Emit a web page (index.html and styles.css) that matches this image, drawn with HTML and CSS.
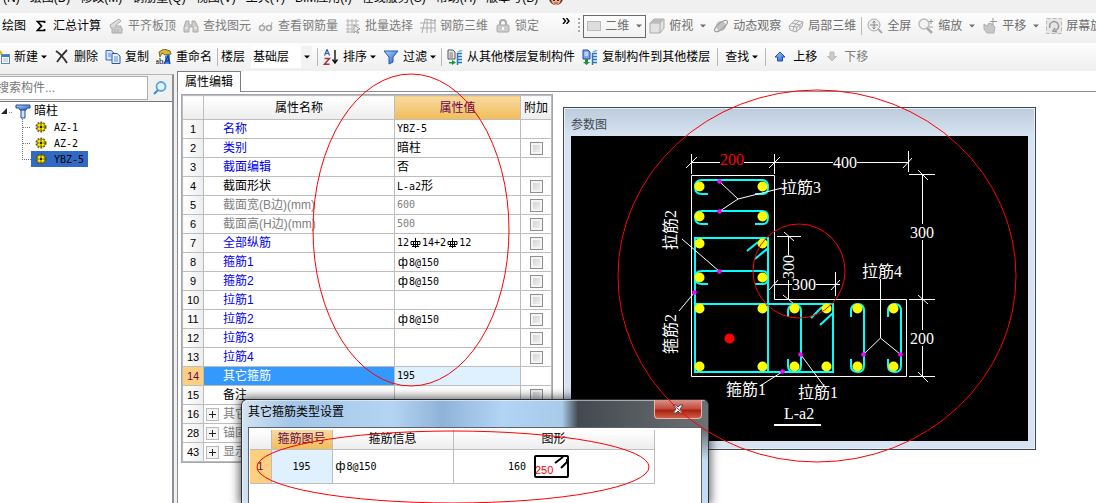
FILE: index.html
```html
<!DOCTYPE html>
<html lang="zh-CN">
<head>
<meta charset="utf-8">
<title>属性编辑</title>
<link rel="stylesheet" href="styles.css">
</head>
<body>
<svg class="defs" aria-hidden="true">
  <defs>
    <linearGradient id="blue" x1="0" y1="0" x2="1" y2="1"><stop offset="0" stop-color="#a9d2fb"/><stop offset="1" stop-color="#1f5fd0"/></linearGradient>
    <symbol id="arrow" viewBox="0 0 6 4"><path d="M0 0.5H6L3 3.5Z" fill="currentColor"/></symbol>
    <symbol id="copyfloor" viewBox="0 0 16 16">
      <path d="M1 1H6L8 3V10H1Z" fill="#e8e8e8" stroke="#555"/><path d="M2.500 4H6M2.500 6H6M2.500 8H6" stroke="#777"/>
      <path d="M2 13H5V11L9 13.500L5 16V14.500H2Z" fill="#149a3a"/>
      <path d="M10.500 4V16M10 4.500H15M10 7.500H15M10 10.500H15M10 13.500H15" stroke="#2b74b8" stroke-width="1.500"/><path d="M10 3L13 1H16L13.500 3Z" fill="#7fb7e6"/>
    </symbol>
    <symbol id="copyfloor2" viewBox="0 0 16 16">
      <path d="M1 1H6L8 3V10H1Z" fill="#7ea6ea" stroke="#2848a8"/><path d="M2.500 4H6M2.500 6H6" stroke="#fff"/>
      <path d="M3 10V13H1L4.500 16L8 13H6V10Z" fill="#149a3a"/>
      <path d="M10.500 4V16M10 4.500H15M10 7.500H15M10 10.500H15M10 13.500H15" stroke="#2b74b8" stroke-width="1.500"/><path d="M10 3L13 1H16L13.500 3Z" fill="#7fb7e6"/>
    </symbol>
    <symbol id="gear" viewBox="0 0 12 12">
      <circle cx="6" cy="6" r="4.700" fill="none" stroke="#5c5200" stroke-width="1.600" stroke-dasharray="1.800 1.200"/>
      <circle cx="6" cy="6" r="4" fill="#ffee00" stroke="#6b6000" stroke-width=".6"/><circle cx="6" cy="6" r="1.400" fill="#222"/>
      <path d="M6 2V4M6 8V10M2 6H4M8 6H10" stroke="#665b00"/>
    </symbol>
    <symbol id="rebar" viewBox="0 0 12 12"><path d="M6.500 1V11M2 4.500H11V7.500H2ZM4.500 4V9.500M8.500 4V9.500M3 9.500H10" fill="none" stroke="#000"/></symbol>
  </defs>
</svg>

<nav class="menubar">
  <a href="#">(N)</a><a href="#">绘图(D)</a><a href="#">修改(M)</a><a href="#">钢筋量(Q)</a><a href="#">视图(V)</a><a href="#">工具(T)</a><a href="#">BIM应用(I)</a><a href="#">在线服务(S)</a><a href="#">帮助(H)</a><a href="#">版本号(B)</a>
  <svg class="face" viewBox="0 0 16 16"><circle cx="8" cy="8" r="7" fill="#5b2f22"/><path d="M3 8Q8 5 13 8Q13 14 8 15Q3 14 3 8Z" fill="#f2b18a"/><circle cx="6" cy="10" r="1"/><circle cx="10" cy="10" r="1"/><path d="M6 13H10" stroke="#b33"/></svg>
</nav>

<div class="toolrow">
  <div class="toolbar tb-main">
    <button>绘图</button>
    <button><svg class="ic" viewBox="0 0 16 16"><path d="M11.500 5V3.500H4.500L8.500 8L4.500 12.500H11.500V11" fill="none" stroke="#000" stroke-width="1.700"/></svg>汇总计算</button>
    <button disabled><svg class="ic" viewBox="0 0 16 16"><path d="M2 7L11 1L13 3L7 8L13 8V10H3Z" fill="#ddd" stroke="#aaa"/><path d="M4 10V15H14V10M7 11V15M10 11V15" fill="#ccc" stroke="#aaa"/></svg>平齐板顶</button>
    <button disabled><svg class="ic" viewBox="0 0 16 16"><path d="M3 3H6V7H9V3H12L15 9V14H10V9H6V14H1V9Z" fill="#ccc" stroke="#aaa"/><path d="M2 10H5M11 10H14" stroke="#fff"/></svg>查找图元</button>
    <button disabled><svg class="ic" viewBox="0 0 16 16"><circle cx="4" cy="10" r="2.500" fill="none" stroke="#aaa" stroke-width="1.500"/><circle cx="11" cy="10" r="2.500" fill="none" stroke="#aaa" stroke-width="1.500"/><path d="M6 9H9M2 9L6 5M13 10L14 4" stroke="#aaa" fill="none"/></svg>查看钢筋量</button>
    <button disabled><svg class="ic" viewBox="0 0 16 16"><path d="M1 3H14M1 7H14M1 11H8M1 14H8M3 1V15M7 1V15M11 1V9" stroke="#b4b4b4"/><path d="M9 7L15 11L12 12L14 15L12 15L11 13L9 15Z" fill="#eee" stroke="#999"/></svg>批量选择</button>
    <button disabled><svg class="ic" viewBox="0 0 16 16"><path d="M0 5H15M0 10H15M2 15L5 1M7 1V15M11 1V15M15 1V14M5 1L16 3" stroke="#aaa" fill="none"/></svg>钢筋三维</button>
    <button disabled><svg class="ic" viewBox="0 0 16 16"><path d="M5 8V5Q5 2 8 2Q11 2 11 5V8" fill="none" stroke="#aaa" stroke-width="2"/><rect x="2" y="7" width="12" height="7" rx="1" fill="#ccc" stroke="#aaa"/><path d="M8 9V12" stroke="#fff" stroke-width="2"/></svg>锁定</button>
    <button class="more" aria-label="更多"><svg viewBox="0 0 8 6"><path d="M1 0L3.500 3L1 6M4.500 0L7 3L4.500 6" fill="none" stroke="#000" stroke-width="1.400"/></svg></button>
  </div>
  <div class="toolbar tb-view">
    <i class="grip"></i>
    <label class="viewmode"><svg viewBox="0 0 14 12"><rect x=".5" y="1.500" width="13" height="9" fill="#ddd" stroke="#bbb"/></svg><select aria-label="视图模式"><option>二维</option></select><svg class="arrow"><use href="#arrow"/></svg></label>
    <button disabled><svg class="ic" viewBox="0 0 16 16"><path d="M1 5L5 1H15V10L11 15H1Z" fill="#e2e2e2" stroke="#aaa"/><path d="M1 5H11V15M11 5L15 1" fill="none" stroke="#aaa"/><path d="M1 5L5 1H15L11 5Z" fill="#bbb"/></svg>俯视<svg class="arrow"><use href="#arrow"/></svg></button>
    <button disabled><svg class="ic" viewBox="0 0 16 16"><circle cx="8" cy="8" r="5" fill="#c2c2c2"/><ellipse cx="8" cy="8" rx="8" ry="3" transform="rotate(-40 8 8)" fill="none" stroke="#999"/></svg>动态观察</button>
    <button disabled><svg class="ic" viewBox="0 0 16 16"><path d="M1 8L7 2L15 4L14 9L8 14L2 12ZM1 8L9 9L15 4M9 9L8 14M4 5L12 7V11M5 13L6 8L11 3" fill="#eee" stroke="#aaa"/></svg>局部三维</button>
    <i class="sep"></i>
    <button disabled><svg class="ic" viewBox="0 0 16 16"><circle cx="7" cy="7" r="6" fill="#eee" stroke="#aaa"/><path d="M7 3V11M3 7H11M5.500 4.500L7 3L8.500 4.500M5.500 9.500L7 11L8.500 9.500" stroke="#888" fill="none"/><path d="M11 11L15 15" stroke="#aaa" stroke-width="2"/></svg>全屏</button>
    <button disabled><svg class="ic" viewBox="0 0 16 16"><circle cx="6" cy="6" r="5" fill="#f2f2f2" stroke="#bbb" stroke-width="1.500"/><path d="M9 10L14 15" stroke="#aaa" stroke-width="2.500"/><path d="M13 1V6M11 3.500H15M11 9H15" stroke="#999"/></svg>缩放<svg class="arrow"><use href="#arrow"/></svg></button>
    <button disabled><svg class="ic" viewBox="0 0 16 16"><path d="M2 6L5 8L7 5L10 6L13 9L12 15H5L2 11Z" fill="#c6c6c6" stroke="#b0b0b0"/><path d="M11 0V7M8 3.500H15" stroke="#999"/></svg>平移<svg class="arrow"><use href="#arrow"/></svg></button>
    <button disabled><svg class="ic" viewBox="0 0 16 16"><rect x=".5" y=".5" width="15" height="15" fill="#e6e6e6" stroke="#bbb" stroke-dasharray="4 2"/><path d="M4 10A4.500 4.500 0 1 1 9 12.500M9 10L7 13L11 14" fill="none" stroke="#999" stroke-width="1.500"/></svg>屏幕旋转</button>
  </div>
</div>

<div class="toolbar tb-edit">
  <button class="b-new"><svg class="ic-new" viewBox="0 0 10 16"><path d="M0 1L3 4L0 6Z" fill="#e8b820"/><rect x="1.500" y="5.500" width="8" height="9" fill="#fff" stroke="#5d86c8"/><path d="M2 7H9" stroke="#3a78d8" stroke-width="2"/><path d="M3 10H8M3 12H8" stroke="#9bb5dc"/></svg>新建<svg class="arrow"><use href="#arrow"/></svg></button>
  <button><svg class="ic" viewBox="0 0 16 16"><path d="M2 2Q8 6 13 14M13 1Q7 7 3 13" fill="none" stroke="#333" stroke-width="1.800"/></svg>删除</button>
  <button><svg class="ic" viewBox="0 0 16 16"><path d="M1 1.500H6L9 4V11H1Z" fill="#d4e4fb" stroke="#3e6cb8"/><path d="M7 4.500H12L15 7V14.500H7Z" fill="#eaf2ff" stroke="#2c56a5"/><path d="M9 8H13M9 10H13M9 12H13M3 5H6M3 7H6" stroke="#5c8ad4"/></svg>复制</button>
  <button><svg class="ic" viewBox="0 0 16 16"><path d="M3 3L8 0L14 2L15 5L9 6L6 4L4 8Z" fill="#d7b73c" stroke="#7a6a20"/><path d="M9 7L14 5V15H9Z" fill="#4d8ee0"/><text x="-1" y="15" class="ab">ab</text><path d="M8 15L12 7L14 15M9.500 12H13" stroke="#173f91" stroke-width="1.300" fill="none"/></svg>重命名</button>
  <i class="sep"></i>
  <label class="floor">楼层<span class="combo"><select><option>基础层</option></select><svg class="arrow"><use href="#arrow"/></svg></span></label>
  <i class="sep"></i>
  <button><svg class="ic" viewBox="0 0 16 16"><path d="M1.500 6.500L4 .5L6.500 6.500M2.500 4.500H5.500" fill="none" stroke="#2d5bb0" stroke-width="1.200"/><path d="M1.500 9.500H6.500L1.500 15.200H6.500" fill="none" stroke="#a8323c" stroke-width="1.400"/><path d="M12 1V13M9.500 10.500L12 14L14.500 10.500" fill="none" stroke="#111" stroke-width="1.400"/></svg>排序<svg class="arrow"><use href="#arrow"/></svg></button>
  <button><svg class="ic" viewBox="0 0 16 16"><path d="M1 2H15L10 8V13L6 15V8Z" fill="url(#blue)" stroke="#2458b8"/></svg>过滤<svg class="arrow"><use href="#arrow"/></svg></button>
  <i class="sep"></i>
  <button><svg class="ic"><use href="#copyfloor"/></svg>从其他楼层复制构件</button>
  <button><svg class="ic"><use href="#copyfloor2"/></svg>复制构件到其他楼层</button>
  <i class="sep wide"></i>
  <button>查找<svg class="arrow"><use href="#arrow"/></svg></button>
  <i class="sep wide"></i>
  <button><svg class="ic" viewBox="0 0 16 16"><path d="M7 3L12 8H9.500V12H4.500V8H2Z" fill="url(#blue)" stroke="#1e4fb4"/></svg>上移</button>
  <button disabled><svg class="ic" viewBox="0 0 16 16"><path d="M8 12L12.500 7.500H10V3H6V7.500H3.500Z" fill="#ccc" stroke="#bbb"/></svg>下移</button>
</div>

<main class="main">
  <aside class="sidebar">
    <form class="search">
      <input type="text" placeholder="搜索构件..." aria-label="搜索构件">
      <button type="button" aria-label="搜索"><svg viewBox="0 0 14 14"><circle cx="8" cy="5.500" r="4.500" fill="#e9f5ff" stroke="#58a6e6" stroke-width="1.800"/><path d="M5 9L1 13" stroke="#3d8fd8" stroke-width="2.200"/></svg></button>
    </form>
    <ul class="tree">
      <li class="root"><svg class="tw" viewBox="0 0 12 8"><path d="M7 1V7H1Z" fill="#222"/><path d="M9 5.500H12" stroke="#888" stroke-dasharray="1 1"/></svg><svg class="col" viewBox="0 0 16 16"><path d="M1 2H15V5H12L11 7H5L4 5H1Z" fill="url(#blue)" stroke="#244a90"/><path d="M6 7H10V15H6Z" fill="#cfe2fb" stroke="#244a90"/></svg>暗柱
      </li>
      <li class="leaf"><svg class="dots"><path d="M1.500 0V16M2 8.500H11" /></svg><a href="#" class="node"><svg><use href="#gear"/></svg>AZ-1</a></li>
      <li class="leaf"><svg class="dots"><path d="M1.500 0V16M2 8.500H11" /></svg><a href="#" class="node"><svg><use href="#gear"/></svg>AZ-2</a></li>
      <li class="leaf"><svg class="dots"><path d="M1.500 0V8.500H11" /></svg><a href="#" class="node on"><svg><use href="#gear"/></svg>YBZ-5</a></li>
    </ul>
  </aside>
  <section class="props">
    <div class="tabs"><button class="tab">属性编辑</button></div>
    <div class="pane">
      <table class="grid">
        <colgroup><col class="c-no"><col class="c-name"><col class="c-val"><col class="c-add"></colgroup>
        <thead><tr><th></th><th>属性名称</th><th class="hot">属性值</th><th>附加</th></tr></thead>
        <tbody>
          <tr><th>1</th><td class="k">名称</td><td class="v">YBZ-5</td><td></td></tr>
          <tr><th>2</th><td class="k">类别</td><td class="v"><span>暗柱</span></td><td><input type="checkbox" aria-label="附加 类别"></td></tr>
          <tr><th>3</th><td class="k">截面编辑</td><td class="v"><span>否</span></td><td></td></tr>
          <tr><th>4</th><td class="k plain">截面形状</td><td class="v">L-a2<span>形</span></td><td><input type="checkbox" aria-label="附加 截面形状"></td></tr>
          <tr class="dim"><th>5</th><td class="k">截面宽(B边)(mm)</td><td class="v">600</td><td><input type="checkbox" aria-label="附加 截面宽"></td></tr>
          <tr class="dim"><th>6</th><td class="k">截面高(H边)(mm)</td><td class="v">500</td><td><input type="checkbox" aria-label="附加 截面高"></td></tr>
          <tr><th>7</th><td class="k">全部纵筋</td><td class="v">12<svg class="sym"><use href="#rebar"/></svg>14+2<svg class="sym"><use href="#rebar"/></svg>12</td><td><input type="checkbox" aria-label="附加 全部纵筋"></td></tr>
          <tr><th>8</th><td class="k">箍筋1</td><td class="v"><b class="phi">ф</b>8@150</td><td><input type="checkbox" aria-label="附加 箍筋1"></td></tr>
          <tr><th>9</th><td class="k">箍筋2</td><td class="v"><b class="phi">ф</b>8@150</td><td><input type="checkbox" aria-label="附加 箍筋2"></td></tr>
          <tr><th>10</th><td class="k">拉筋1</td><td class="v"></td><td><input type="checkbox" aria-label="附加 拉筋1"></td></tr>
          <tr><th>11</th><td class="k">拉筋2</td><td class="v"><b class="phi">ф</b>8@150</td><td><input type="checkbox" aria-label="附加 拉筋2"></td></tr>
          <tr><th>12</th><td class="k">拉筋3</td><td class="v"></td><td><input type="checkbox" aria-label="附加 拉筋3"></td></tr>
          <tr><th>13</th><td class="k">拉筋4</td><td class="v"></td><td><input type="checkbox" aria-label="附加 拉筋4"></td></tr>
          <tr class="sel"><th>14</th><td class="k">其它箍筋</td><td class="v">195</td><td></td></tr>
          <tr><th>15</th><td class="k plain">备注</td><td class="v"></td><td><input type="checkbox" aria-label="附加 备注"></td></tr>
          <tr class="dim group"><th>16</th><td class="k"><button aria-label="展开"></button>其它属性</td><td></td><td></td></tr>
          <tr class="dim group"><th>28</th><td class="k"><button aria-label="展开"></button>锚固搭接</td><td></td><td></td></tr>
          <tr class="dim group"><th>43</th><td class="k"><button aria-label="展开"></button>显示样式</td><td></td><td></td></tr>
        </tbody>
      </table>
    </div>
  </section>
</main>

<section class="window param">
  <h2>参数图</h2>
  <svg class="drawing" viewBox="571 136 457 305">
    <path class="w" d="M691.500 175.500H774.500V299.500H906.500V376.500H691.500Z"/>
    <path class="w" d="M691.500 162.500H720M744 162.500H833M857 162.500H908.500M691.500 154V174M774.500 154V174M908.500 151V172M686 168L697 157M769 168L780 157M903 168L912 158"/>
    <path class="w" d="M922.500 174.500V224M922.500 240V330M922.500 346V376.500M909 174.500H935M909 299.500H935M909 376.500H935M918 170L928 180M918 295L928 304M918 372L928 382"/>
    <path class="w" d="M788.500 236V255M788.500 280V299M777 236.500H801M784 232L794 241M783 295L794 304M774.500 284.500H792M816 284.500H840M835.500 272V296M769 290L778 280M831 290L840 280"/>
    <path class="c" d="M708 194H702Q695 194 695 187Q695 180 702 180H762Q768 180 768 187Q768 194 763 194H755"/>
    <path class="c" d="M708 224H702Q695 224 695 217Q695 211 702 211H762Q768 211 768 217Q768 224 763 224H755"/>
    <path class="c" d="M708 284H702Q695 284 695 277Q695 271 702 271H762Q768 271 768 277Q768 284 763 284H755"/>
    <path class="c" d="M695 238H768V372H695ZM695 304H833V372H695M747 251L758 242M755 259L768 248M811 318L822 307M820 325L833 313"/>
    <path class="c" d="M788 317V311Q788 305 795 305Q801 305 801 311V365Q801 372 795 372Q788 372 788 366V359"/>
    <path class="c" d="M851 317V311Q851 304 858 304Q864 304 864 311V365Q864 372 858 372Q851 372 851 366V359"/>
    <path class="c" d="M888 317V311Q888 304 895 304Q901 304 901 311V365Q901 372 895 372Q888 372 888 366V359"/>
    <g fill="#ff0">
      <circle cx="699.500" cy="186.500" r="5"/><circle cx="762.500" cy="186.500" r="5"/><circle cx="699.500" cy="216.500" r="5"/><circle cx="762.500" cy="216.500" r="5"/>
      <circle cx="699.500" cy="243.500" r="5"/><circle cx="762.500" cy="243.500" r="5"/><circle cx="699.500" cy="277.500" r="5"/><circle cx="762.500" cy="277.500" r="5"/>
      <circle cx="699.500" cy="308.500" r="5"/><circle cx="762.500" cy="308.500" r="5"/><circle cx="794.500" cy="308.500" r="5"/><circle cx="826.500" cy="308.500" r="5"/><circle cx="857.500" cy="308.500" r="5"/><circle cx="893.500" cy="308.500" r="5"/>
      <circle cx="699.500" cy="366.500" r="5"/><circle cx="762.500" cy="366.500" r="5"/><circle cx="794.500" cy="366.500" r="5"/><circle cx="826.500" cy="366.500" r="5"/><circle cx="857.500" cy="366.500" r="5"/><circle cx="893.500" cy="366.500" r="5"/>
    </g>
    <circle cx="729.500" cy="338.500" r="5" fill="#f00"/>
    <path class="w" d="M720 182L738 199L720 211M738 199L782 188M682 239L719 271M679 311L694 293M760 386L782 372M824 386L801 355M880.500 279V338L864 354M880.500 338L900 354"/>
    <g fill="#f0f">
      <circle cx="719.500" cy="181.500" r="2.300"/><circle cx="719.500" cy="211.500" r="2.300"/><circle cx="719.500" cy="271.500" r="2.300"/><circle cx="694.500" cy="292.500" r="2.300"/>
      <circle cx="782.500" cy="371.500" r="2.300"/><circle cx="800.500" cy="354.500" r="2.300"/><circle cx="863.500" cy="354.500" r="2.300"/><circle cx="900.500" cy="354.500" r="2.300"/>
    </g>
    <path d="M774 425H821" stroke="#fff" stroke-width="2"/>
    <text x="720" y="165" class="r">200</text><text x="833" y="168">400</text>
    <text x="781" y="193">拉筋3</text><text x="862" y="277">拉筋4</text>
    <text x="726" y="395">箍筋1</text><text x="798" y="398">拉筋1</text>
    <text x="910" y="238">300</text><text x="910" y="344">200</text><text x="792" y="290">300</text>
    <text x="784" y="419">L-a2</text>
    <text transform="translate(676 250) rotate(-90)">拉筋2</text>
    <text transform="translate(676 354) rotate(-90)">箍筋2</text>
    <text transform="translate(794 279) rotate(-90)">300</text>
  </svg>
</section>

<section class="window dialog" role="dialog" aria-labelledby="dlg-title">
  <header><h2 id="dlg-title">其它箍筋类型设置</h2><button class="close" aria-label="关闭"><svg viewBox="0 0 12 10"><path d="M1 1H4L6 3L8 1H11L8 5L11 9H8L6 7L4 9H1L4 5Z" fill="#fff" stroke="#434b5c"/></svg></button></header>
  <div class="dialog-body">
    <table class="grid types">
      <colgroup><col class="t-no"><col class="t-id"><col class="t-info"><col class="t-fig"></colgroup>
      <thead><tr><th></th><th class="hot">箍筋图号</th><th>箍筋信息</th><th>图形</th></tr></thead>
      <tbody><tr><th class="cur">1</th><td class="id">195</td><td class="v"><b class="phi">ф</b>8@150</td>
        <td><div class="fig">160<svg viewBox="0 0 35 23"><rect x="1" y="1" width="33" height="21" rx="1" fill="none" stroke="#000" stroke-width="2"/><path d="M21 8L29 2M27 13L33 7V4" fill="none" stroke="#000" stroke-width="2"/><text x="1" y="19">250</text></svg></div></td></tr></tbody>
    </table>
  </div>
</section>

<svg class="marks" aria-hidden="true">
  <ellipse cx="411" cy="230" rx="98" ry="156"/>
  <ellipse cx="817" cy="276" rx="199" ry="186"/>
  <ellipse cx="799" cy="271" rx="46" ry="47"/>
  <ellipse cx="453" cy="467" rx="196" ry="36"/>
</svg>
</body>
</html>
```
FILE: styles.css
```css
* { box-sizing: border-box; }
html, body { height: 100%; }
body {
  margin: 0;
  position: relative;
  display: flex;
  flex-direction: column;
  overflow: hidden;
  background: #f0f0f0;
  color: #000;
  font: 12px/16px "Liberation Sans", "Noto Sans CJK SC", sans-serif;
}
button, input, select { font: inherit; color: inherit; }
button { border: 0; background: none; padding: 0; }
a { color: inherit; text-decoration: none; }
svg { display: block; flex: none; }
.defs { position: absolute; width: 0; height: 0; }

/* menu and toolbars */
.menubar {
  display: flex;
  flex: none;
  gap: 10px;
  height: 13px;
  padding-left: 3px;
  overflow: hidden;
  white-space: nowrap;
}
.menubar a { margin-top: -10px; }
.face { width: 16px; height: 16px; margin-top: -10px; }
.toolrow { display: flex; flex: none; height: 30px; overflow: hidden; }
.toolbar {
  display: flex;
  flex: none;
  align-items: center;
  gap: 7px;
  white-space: nowrap;
  background: linear-gradient(#fdfdfd, #efefef);
}
.toolbar button { display: flex; align-items: center; gap: 4px; }
.toolbar button:disabled { color: #7d7d7d; }
.toolbar .arrow { width: 6px; height: 4px; }
.ic { width: 16px; height: 16px; }
.sep { width: 1px; height: 18px; background: #b8b8b8; }
.tb-main { padding: 0 4px 4px 2px; border-right: 1px solid #f0f0f0; }
.toolbar .more { margin: 0 0 10px 16px; }
.more svg { width: 8px; height: 6px; }
.tb-view { flex: 1 0 auto; padding: 0 0 4px 3px; }
.toolbar.tb-view button { color: #6e6e6e; }
.tb-view button .arrow { margin-left: 3px; }
.tb-view .sep { margin: 0 -2px; }
.grip { width: 2px; height: 16px; margin-right: -4px; background: repeating-linear-gradient(#aaa 0 2px, transparent 2px 4px); }
.viewmode {
  display: flex;
  align-items: center;
  gap: 4px;
  height: 23px;
  padding: 0 3px;
  border: 1px solid #6b6b6b;
  color: #6e6e6e;
  margin-right: -4px;
}
.viewmode > svg:first-child { width: 14px; height: 12px; }
select { appearance: none; border: 0; background: transparent; padding: 0; }
.viewmode select { width: 27px; }
.tb-edit { height: 28px; padding-left: 0; overflow: hidden; }
.tb-edit .arrow { margin-left: -1px; }
.tb-edit .sep { margin: 0 -2px; }
.tb-edit .sep.wide { margin: 0; }
.ic-new { width: 10px; height: 16px; }
.ab { font: 9px "Liberation Serif", serif; }
.floor { display: flex; align-items: center; gap: 6px; margin-left: -2px; }
.combo { display: flex; align-items: center; height: 22px; padding: 0 2px; background: linear-gradient(90deg, #fff 50px, #f3f3f3 50px); }
.combo select { width: 52px; }

/* component list */
.main { display: flex; flex: 1; min-height: 0; }
.sidebar {
  flex: none;
  display: flex;
  flex-direction: column;
  width: 174px;
  margin-top: 3px;
  border-top: 1px solid #b5b5b5;
  border-right: 2px solid #8e8e96;
}
.search { display: flex; align-items: center; height: 27px; border-bottom: 1px solid #77777f; }
.search input {
  width: 154px;
  height: 24px;
  margin-left: -6px;
  padding: 0 2px 1px;
  border: 1px solid #abadb3;
  background: #fff;
  outline: 0;
}
.search input::placeholder { color: #777; }
.search button { margin-left: 5px; }
.search button svg { width: 14px; height: 14px; }
.tree { flex: 1; margin: 0; padding: 1px 0; list-style: none; background: #fff; }
.root, .leaf, .node { display: flex; align-items: center; }
.root { height: 16px; gap: 3px; }
.tw { width: 12px; height: 8px; }
.col { width: 16px; height: 16px; }
.leaf { height: 16px; padding-left: 21px; }
.dots { width: 10px; height: 16px; fill: none; stroke: #777; stroke-dasharray: 1 1; }
.dots path { shape-rendering: crispEdges; }
.node { gap: 7px; height: 16px; padding: 0 4px; font: 10px "DejaVu Sans Mono", monospace; }
.node svg { width: 12px; height: 12px; }
.node.on { background: #316ac5; }

/* property grid */
.props { flex: 1; display: flex; flex-direction: column; min-width: 0; margin-left: 3px; }
.tabs { display: flex; height: 21px; border-bottom: 1px solid #8b8b93; background: #fff; }
.tab {
  height: 21px;
  padding: 0 7px 1px;
  border: 1px solid #7d7d85;
  border-bottom: 0;
  background: #fff;
}
.pane { flex: 1; min-height: 0; overflow: hidden; padding: 3px 0 0 4px; background: #fff; border-left: 1px solid #8b8b93; }
.grid { border-collapse: collapse; table-layout: fixed; border-spacing: 0; background: #fff; }
.pane .grid { width: 369px; outline: 1px solid #a5a5ad; }
.grid th, .grid td { height: 19px; padding: 0; border: 1px solid #bdbdbd; white-space: nowrap; overflow: hidden; line-height: 16px; }
.grid th { font-weight: 400; background: linear-gradient(#fff, #ededed); }
.grid thead th { height: 24px; }
.grid tbody th { font-size: 11px; background: linear-gradient(90deg, #fff, #ededed); }
.grid thead .hot { background: linear-gradient(#f8d9a0, #f2bd5a); color: #640a55; }
.c-no { width: 21px; }
.c-name { width: 191px; }
.c-val { width: 126px; }
.c-add { width: 31px; }
.grid .k { padding-left: 19px; color: #0000f0; }
.grid .k.plain { color: #000; }
.grid .v { padding-left: 2px; font: 10px/16px "DejaVu Sans Mono", monospace; }
.v span { font: 12px/16px "Noto Sans CJK SC", sans-serif; }
.grid .dim .k, .grid .dim .v { color: #808080; }
.phi { display: inline-block; width: 12px; text-align: center; font: 12px/16px "Liberation Sans", sans-serif; }
.sym { display: inline-block; width: 12px; height: 12px; margin-right: 1px; vertical-align: -3px; }
.grid .sel th { background: #ffcf80; color: #640a55; }
.grid .sel .k { background: #3399ff; color: #fff; }
.grid .sel .v { background: #dff0ff; }
.grid .group .k { padding-left: 2px; }
.group button {
  width: 13px;
  height: 13px;
  margin-right: 4px;
  border: 1px solid #bbb;
  vertical-align: -2px;
  background:
    linear-gradient(#222, #222) center / 7px 1px no-repeat,
    linear-gradient(#222, #222) center / 1px 7px no-repeat,
    #f4f4f4;
}
input[type="checkbox"] {
  appearance: none;
  display: block;
  width: 13px;
  height: 13px;
  margin: 0 auto;
  border: 1px solid #8e8f8f;
  background: linear-gradient(135deg, #c9cdd4, #f6f6f6);
  box-shadow: inset 0 0 0 2px #f4f4f4;
}

/* floating windows */
.window { position: absolute; }
.window h2 { margin: 0; font-size: 12px; font-weight: 400; }
.param {
  left: 563px;
  top: 107px;
  width: 473px;
  padding: 0 7px 8px;
  border: 1px solid #42464e;
  background: linear-gradient(#bccbdc, #d7e3f1 28px);
  box-shadow: inset 0 0 0 1px #e8f0f8;
}
.param h2 { height: 28px; padding-top: 9px; color: #40474f; }
.drawing { width: 100%; background: #000; }
.drawing text { font: 16px "Liberation Serif", "Noto Sans CJK SC", serif; fill: #fff; }
.drawing .r { fill: #f00; }
.w { fill: none; stroke: #fff; stroke-width: 1; }
.c { fill: none; stroke: #0ff; stroke-width: 2; }
.dialog {
  left: 241px;
  top: 399px;
  width: 468px;
  bottom: 0;
  display: flex;
  flex-direction: column;
  padding: 0 6px;
  border: 1px solid #2c3036;
  border-bottom: 0;
  border-radius: 6px 6px 0 0;
  background:
    linear-gradient(transparent 30px, #c5dcf2 60px) right / 8px 100% no-repeat,
    linear-gradient(90deg, #d3e3f1, #a4c6e8 50px, #b4d4f2 150px, #8fb3d8 200px, #b2d4f5 260px, #a9cbea 320px, #43494f 336px, #6d7173);
  box-shadow: inset 1px 1px 0 rgba(255, 255, 255, .5), 0 0 10px 2px rgba(0, 0, 0, .6);
}
.dialog header { display: flex; justify-content: space-between; height: 27px; }
.dialog h2 { padding-top: 4px; }
.close {
  display: flex;
  align-items: center;
  justify-content: center;
  width: 48px;
  height: 19px;
}
.dialog .close {
  border: 1px solid #e8b8ad;
  border-top: 0;
  border-radius: 0 0 4px 4px;
  background: linear-gradient(#d8928a, #c2483a 9px, #a61f10 10px, #cf5d44);
}
.close svg { width: 12px; height: 10px; }
.dialog-body { flex: 1; min-height: 0; overflow: hidden; padding: 2px 0 0 1px; border: 1px solid #5a6470; border-bottom: 0; background: #fff; }
.types { width: 404px; }
.types .t-no { width: 21px; }
.types .t-id { width: 61px; }
.types .t-info { width: 121px; }
.types .t-fig { width: 201px; }
.types thead th { height: 19px; border-top: 0; }
.types thead th:first-child, .types tbody .cur { border-left: 0; }
.types tbody td, .types tbody th { height: 34px; }
.types tbody .cur { background: #ffcf80; color: #640a55; }
.types .id { background: #dff0ff; text-align: center; font: 10px "DejaVu Sans Mono", monospace; }
.fig { display: flex; align-items: center; justify-content: center; gap: 8px; padding-right: 30px; font: 10px "DejaVu Sans Mono", monospace; }
.fig svg { width: 35px; height: 23px; }
.fig text { font: 11px "Liberation Sans", sans-serif; fill: #f00; }

/* review marks drawn over everything */
.marks { position: absolute; inset: 0; width: 100%; height: 100%; pointer-events: none; fill: none; stroke: #f00; }
```
